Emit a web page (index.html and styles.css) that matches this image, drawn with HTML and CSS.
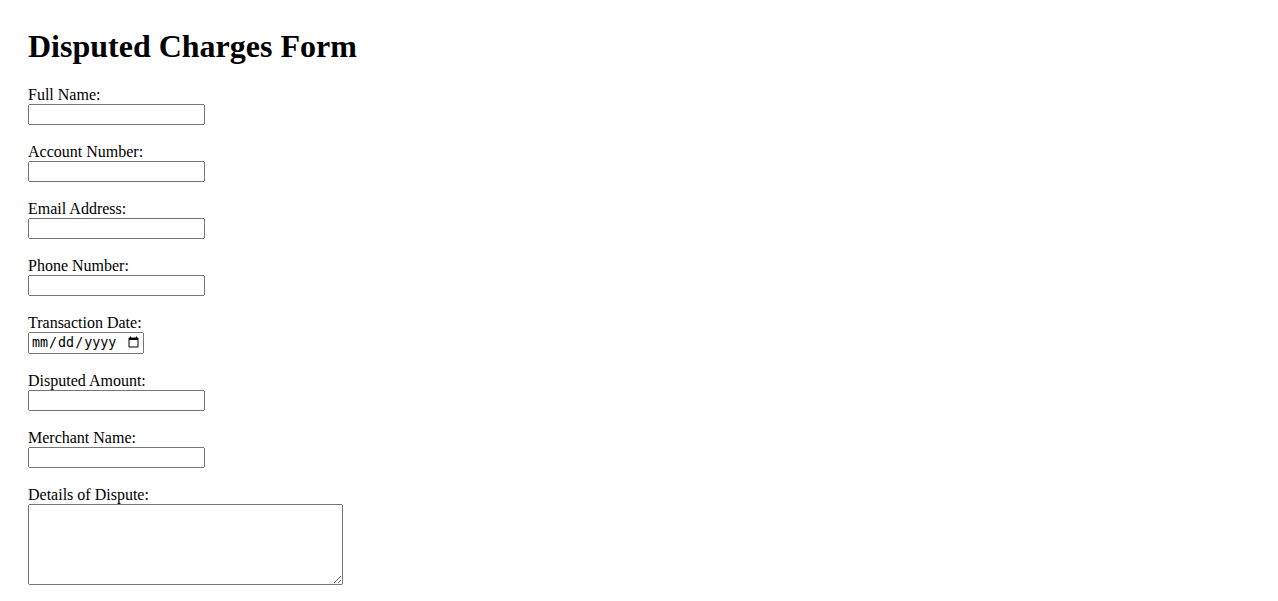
FILE: index.html
```html
<!DOCTYPE html>
<html lang="en">
<head>
<meta charset="UTF-8">
<title>Disputed Charges Form</title>
<link rel="stylesheet" href="styles.css">
</head>
<body class="page">
<h1 class="title">Disputed Charges Form</h1>
<form class="dispute-form">
<label for="name">Full Name:</label><br>
<input class="field" type="text" id="name" name="name"><br><br>
<label for="account">Account Number:</label><br>
<input class="field" type="text" id="account" name="account"><br><br>
<label for="email">Email Address:</label><br>
<input class="field" type="email" id="email" name="email"><br><br>
<label for="phone">Phone Number:</label><br>
<input class="field" type="tel" id="phone" name="phone"><br><br>
<label for="date">Transaction Date:</label><br>
<input class="date-field" type="date" id="date" name="date"><br><br>
<label for="amount">Disputed Amount:</label><br>
<input class="field" type="number" id="amount" name="amount"><br><br>
<label for="merchant">Merchant Name:</label><br>
<input class="field" type="text" id="merchant" name="merchant"><br><br>
<label for="details">Details of Dispute:</label><br>
<textarea class="details" id="details" name="details" rows="5" cols="40"></textarea><br><br>
</form>
</body>
</html>
```
FILE: styles.css
```css
.page {
  margin: 28px;
  font-family: "Liberation Serif", "Times New Roman", serif;
  font-size: 16px;
  color: #000;
  background: #fff;
}
.title {
  font-size: 32px;
  margin: 0 0 21px;
}
.field {
  width: 177px;
  height: 21px;
  box-sizing: border-box;
}
.date-field {
  width: 116px;
  height: 22px;
  box-sizing: border-box;
}
.details {
  width: 315px;
  height: 81px;
  box-sizing: border-box;
}
```
